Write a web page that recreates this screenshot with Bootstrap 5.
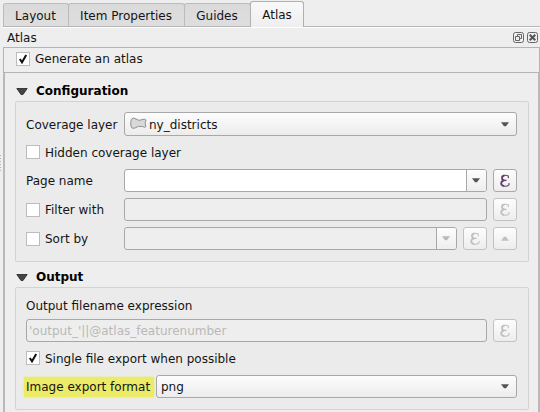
<!DOCTYPE html>
<html lang="en">
<head>
<meta charset="utf-8">
<title>Atlas</title>
<link rel="stylesheet" href="https://cdn.jsdelivr.net/npm/bootstrap@5.3.0/dist/css/bootstrap.min.css">
<style>
body{width:540px;height:412px;overflow:hidden;background:#eee;color:#141414;font:12px/16px "DejaVu Sans",sans-serif}
svg{display:block;flex:none}
.tabs{height:28px;padding:0 0 0 3px}
.tabs .nav-tabs{height:27px;width:537px;border:0;border-bottom:1px solid #b5b5b5;box-shadow:0 1px #fff;align-items:flex-end}
.tabs .nav-link{height:23px;padding:4px 1px 0 0;margin:0 -1px 0 0;border:1px solid #bbb;border-bottom:0;border-radius:3px 3px 0 0;background:linear-gradient(#dadada,#dedede);color:#141414;text-align:center;white-space:nowrap}
.tabs .nav-link.active{height:26px;padding:5px 0 0;margin:0 0 -1px 0;background:linear-gradient(#f9f9f9,#eee);border-color:#b0b0b0;color:#141414}
.dock-title{height:19px;padding:0 2px 0 7px}
.dock-body{margin-left:3px;height:365px}
.generate{height:26px;border:1px solid #b4b4b4;padding:0 0 2px 12px}
.scroller{height:339px;border:solid #b9b9b9;border-width:0 2px 0 2px;padding:8px 9px 0 10px}
.section-title{height:20px;font-weight:700;color:#000;padding-left:1px;gap:8px}
.group{border:1px solid #d3d3d3;border-radius:2px;background:#ebebeb;padding:0 11px 0 10px}
.check{width:14px;height:14px;flex:none;background:#fff;border:1px solid #bcbcbc;margin:0 5px 0 0}
.lab{width:98px;flex:none;white-space:nowrap}
.nudge{padding-top:2px}
.field{height:23px;border:1px solid #a8a8a8;border-radius:3px;background:#fff;min-width:0}
.combo{background:linear-gradient(#fdfdfd,#ececec);color:#141414}
.field.off{background:#eee;color:#b9b9b9}
.drop{width:20px;padding-right:2px;border-left:1px solid #a8a8a8;background:linear-gradient(#fdfdfd,#eee);border-radius:0 2px 2px 0}
.tool{width:24px;height:23px;padding:0;flex:none;border:1px solid #a9a9a9;border-radius:3px;background:linear-gradient(#fdfdfd,#ededed);color:#613e6b}
.tool:not(:first-child){margin-left:6px}
.tool.off{border-color:#c2c2c2;color:#c0c0c0}
.hl{width:130px;height:20px;margin-left:-2px;padding-left:2px;background:#ebeb67;box-shadow:0 0 2px #ebeb67;white-space:nowrap}
.grip{left:0;top:155px;width:1px;height:17px;background:repeating-linear-gradient(#b5b5b5 0 1px,#eee 1px 3px)}
</style>
<script src="https://cdn.jsdelivr.net/npm/bootstrap@5.3.0/dist/js/bootstrap.bundle.min.js"></script>
</head>
<body>
<svg width="0" height="0" class="position-absolute">
<defs>
<symbol id="eps" viewBox="0 0 12 14"><path d="M9.3 4.3V2.1C7.6 1.2 5.9 1.2 4.8 1.6M4.8 6.4H7.6M4.6 12.1C6.6 12.6 8.7 12 10 10.9V8.9" fill="none" stroke="currentColor" stroke-width="1.1"/><path d="M5.4 1.5C3.5 1.8 3 2.9 3 4C3 5.3 3.8 6.2 5.3 6.4C3.3 6.8 2.2 7.8 2.2 9.3C2.2 10.8 3.4 11.9 5.2 12.1" fill="none" stroke="currentColor" stroke-width="1.8"/></symbol>
<symbol id="down" viewBox="0 0 8 5"><path d="M0 .3H8L5 4.3H3Z" fill="currentColor"/></symbol>
<symbol id="tick" viewBox="0 0 12 12"><path d="M2.8 6L5 9.3L9.2 2" fill="none" stroke="#111" stroke-width="2"/></symbol>
<symbol id="fold" viewBox="0 0 12 7"><path d="M.8.5H11.2L7 6.5H5Z" fill="#444" stroke="#222" stroke-width=".8"/></symbol>
</defs>
</svg>
<div class="tabs">
<nav class="nav nav-tabs flex-nowrap">
<a class="nav-link" style="width:66px">Layout</a>
<a class="nav-link" style="width:117px">Item Properties</a>
<a class="nav-link" style="width:67px">Guides</a>
<a class="nav-link active" style="width:54px">Atlas</a>
</nav>
</div>
<div class="dock-title d-flex align-items-center">
<span class="me-auto">Atlas</span>
<svg width="11" height="11" viewBox="0 0 11 11" fill="none" stroke="#666"><rect x=".5" y=".5" width="10" height="10" rx="2"/><path d="M4.5 4.5V2.5H8.5V6.5H6.5M2.5 4.5H6.5V8.5H2.5Z"/></svg>
<svg style="margin-left:3px" width="11" height="11" viewBox="0 0 11 11" fill="none" stroke="#666"><rect x=".5" y=".5" width="10" height="10" rx="2"/><path d="M2.7 2.7L8.3 8.3M8.3 2.7L2.7 8.3" stroke="#555" stroke-width="2"/></svg>
</div>
<main class="dock-body">
<div class="generate d-flex align-items-center"><span class="check"><svg width="12" height="12"><use href="#tick"/></svg></span>Generate an atlas</div>
<div class="scroller">
<div class="section-title d-flex align-items-center"><svg width="12" height="7"><use href="#fold"/></svg>Configuration</div>
<section class="group" style="height:161px">
<div class="d-flex align-items-center" style="height:44px"><span class="lab nudge">Coverage layer</span>
<div class="field combo flex-fill d-flex align-items-center" style="height:24px;padding:0 7px 0 5px">
<svg width="17" height="14" viewBox="0 0 17 14"><path d="M1.2 2.5Q3-.2 6 2Q9 4.4 12 2.7Q15.2 1.2 16 3.1Q14.3 6 15.8 9.6Q15.5 11 12.5 9.6Q8.5 8.3 4.5 11.2Q1.5 12 1 9.2Q.4 5.5 1.2 2.5Z" fill="#d9d9d9" stroke="#8f8f8f"/></svg>
<span class="me-auto nudge" style="margin-left:2px">ny_districts</span><svg width="8" height="5" color="#555"><use href="#down"/></svg></div></div>
<div class="d-flex align-items-center" style="height:12px"><span class="check"></span><span class="nudge">Hidden coverage layer</span></div>
<div class="d-flex align-items-center" style="height:45px"><span class="lab">Page name</span>
<div class="field flex-fill d-flex justify-content-end"><span class="drop d-flex align-items-center justify-content-center"><svg width="8" height="5" color="#555"><use href="#down"/></svg></span></div>
<button class="btn tool d-flex align-items-center justify-content-center"><svg width="12" height="14"><use href="#eps"/></svg></button></div>
<div class="d-flex align-items-center" style="height:13px"><span class="lab d-flex align-items-center"><span class="check"></span>Filter with</span>
<div class="field off flex-fill"></div>
<button class="btn tool off d-flex align-items-center justify-content-center"><svg width="12" height="14"><use href="#eps"/></svg></button></div>
<div class="d-flex align-items-center" style="height:45px"><span class="lab d-flex align-items-center"><span class="check"></span>Sort by</span>
<div class="field off flex-fill d-flex justify-content-end"><span class="drop d-flex align-items-center justify-content-center"><svg width="8" height="5"><use href="#down"/></svg></span></div>
<button class="btn tool off d-flex align-items-center justify-content-center"><svg width="12" height="14"><use href="#eps"/></svg></button>
<button class="btn tool off d-flex align-items-center justify-content-center"><svg width="8" height="5" viewBox="0 0 8 5"><path d="M0 4.7H8L5 .7H3Z" fill="currentColor"/></svg></button></div>
</section>
<div class="section-title d-flex align-items-center" style="margin-top:5px"><svg width="12" height="7"><use href="#fold"/></svg>Output</div>
<section class="group" style="height:123px">
<div class="d-flex align-items-end" style="height:26px">Output filename expression</div>
<div class="d-flex align-items-center" style="height:33px"><div class="field off flex-fill d-flex align-items-center" style="padding-left:2px">'output_'||@atlas_featurenumber</div>
<button class="btn tool off d-flex align-items-center justify-content-center"><svg width="12" height="14"><use href="#eps"/></svg></button></div>
<div class="d-flex align-items-center" style="height:22px"><span class="check"><svg width="12" height="12"><use href="#tick"/></svg></span><span class="nudge">Single file export when possible</span></div>
<div class="d-flex align-items-center" style="height:35px"><span class="hl d-flex align-items-center">Image export format</span>
<div class="field combo flex-fill d-flex align-items-center" style="margin-left:2px;padding:0 7px 0 4px"><span class="me-auto">png</span><svg width="8" height="5" color="#555"><use href="#down"/></svg></div></div>
</section>
</div>
</main>
<i class="grip position-absolute"></i>
</body>
</html>
